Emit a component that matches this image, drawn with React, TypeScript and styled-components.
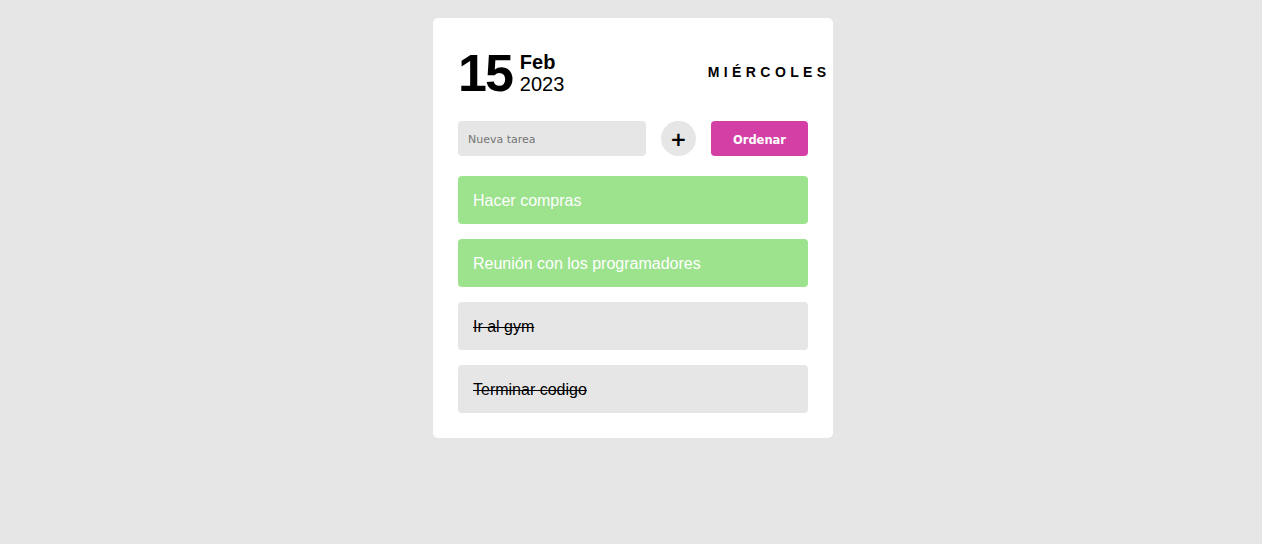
import styled, { createGlobalStyle } from 'styled-components';

interface taskStyle {
  done: boolean;
}

const tasks = [
  { id: 1, text: 'Hacer compras', done: false },
  { id: 2, text: 'Reunión con los programadores', done: false },
  { id: 3, text: 'Ir al gym', done: true },
  { id: 4, text: 'Terminar codigo', done: true },
];

function App() {
  return (
    <>
      <GlobalStyle />
      <Page>
        <Card>
          <Header>
            <DateBox>
              <Day>15</Day>
              <MonthYear>
                <Month>Feb</Month>
                <Year>2023</Year>
              </MonthYear>
            </DateBox>
            <Weekday>MIÉRCOLES</Weekday>
          </Header>

          <Toolbar>
            <Input placeholder="Nueva tarea" />
            <AddButton>+</AddButton>
            <SortButton>Ordenar</SortButton>
          </Toolbar>

          <TaskList>
            {tasks.map((t) => (
              <Task key={t.id} done={t.done}>
                {t.text}
              </Task>
            ))}
          </TaskList>
        </Card>
      </Page>
    </>
  );
}
export default App;

const GlobalStyle = createGlobalStyle`
  html, body {
    margin: 0;
    padding: 0;
    background: #e6e6e6;
    font-family: 'Liberation Sans', Arial, sans-serif;
  }
`;

const Page = styled.div`
  display: flex;
  justify-content: center;
  padding: 18px 0 0 4px;
  min-height: 544px;
  box-sizing: border-box;
`;

const Card = styled.div`
  width: 400px;
  height: 420px;
  box-sizing: border-box;
  background: #fff;
  border-radius: 5px;
  padding: 28px 25px 25px;
`;

const Header = styled.div`
  display: flex;
  align-items: center;
  justify-content: space-between;
  margin-right: -20px;
  height: 52px;
`;

const DateBox = styled.div`
  display: flex;
  align-items: center;
  gap: 8px;
`;

const Day = styled.div`
  font-size: 52px;
  font-weight: 700;
  line-height: 1;
  color: #000;
  letter-spacing: -2px;
  padding-top: 1px;
`;

const MonthYear = styled.div`
  display: flex;
  flex-direction: column;
  line-height: 1.1;
  padding-top: 1px;
`;

const Month = styled.span`
  font-size: 20px;
  font-weight: 700;
`;

const Year = styled.span`
  font-size: 20px;
`;

const Weekday = styled.div`
  font-size: 14px;
  font-weight: 700;
  letter-spacing: 4.4px;
  margin-right: -2.6px;
`;

const Toolbar = styled.div`
  display: flex;
  align-items: center;
  margin-top: 23px;
  gap: 15px;
`;

const Input = styled.input`
  width: 188px;
  height: 35px;
  box-sizing: border-box;
  border: none;
  outline: none;
  border-radius: 4px;
  background: #e6e6e6;
  padding: 2px 10px 0;
  font-family: 'DejaVu Sans', Verdana, sans-serif;
  font-size: 11px;

  &::placeholder {
    color: #757575;
  }
`;

const AddButton = styled.button`
  width: 35px;
  height: 35px;
  border-radius: 50%;
  border: none;
  background: #e6e6e6;
  font-family: 'DejaVu Sans', Verdana, sans-serif;
  font-size: 20px;
  font-weight: 700;
  line-height: 1;
  color: #000;
  padding: 0;
  display: flex;
  align-items: center;
  justify-content: center;
`;

const SortButton = styled.button`
  width: 97px;
  height: 35px;
  border: none;
  border-radius: 4px;
  background: #d43fa6;
  color: #fff;
  font-family: 'DejaVu Sans', Verdana, sans-serif;
  font-size: 11.5px;
  font-weight: 700;
  padding: 2px 0 0;
`;

const TaskList = styled.div`
  display: flex;
  flex-direction: column;
  gap: 15px;
  margin-top: 20px;
`;

const Task = styled.div<taskStyle>`
  height: 48px;
  box-sizing: border-box;
  display: flex;
  align-items: center;
  padding: 2px 15px 0;
  border-radius: 4px;
  font-size: 16px;
  background: ${(props) => (props.done ? '#e6e6e6' : '#9de28d')};
  color: ${(props) => (props.done ? '#000' : '#fff')};
  text-decoration: ${(props) => (props.done ? 'line-through' : 'none')};
`;
